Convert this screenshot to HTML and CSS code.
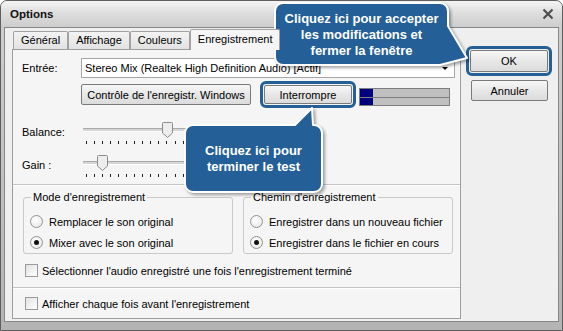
FILE: index.html
```html
<!DOCTYPE html>
<html lang="fr">

<head>
    <meta charset="UTF-8">
    <meta name="viewport" content="width=device-width, initial-scale=1.0">
    <title>Options</title>

    <link rel="stylesheet" href="styles.css">
</head>

<body>

    <div class="screen">

        <!-- fenêtre de dialogue -->
        <div class="window">

            <div class="titlebar">
                <span class="title">Options</span>
                <svg class="close" width="12" height="12" viewBox="0 0 12 12">
                    <path d="M1.5 1.5L10.5 10.5M10.5 1.5L1.5 10.5" stroke="#4f4f4f" stroke-width="2.2" />
                </svg>
            </div>

            <div class="client">

                <div class="main">

                    <!-- onglets -->
                    <div class="tabs">
                        <div class="tab">Général</div>
                        <div class="tab">Affichage</div>
                        <div class="tab">Couleurs</div>
                        <div class="tab active">Enregistrement</div>
                    </div>

                    <div class="panel">

                        <div class="row input-row">
                            <span class="lbl">Entrée:</span>
                            <div class="combo">
                                <span>Stereo Mix (Realtek High Definition Audio) [Actif]</span>
                                <span class="arrow"></span>
                            </div>
                        </div>

                        <div class="row button-row">
                            <button class="btn wide">Contrôle de l'enregistr. Windows</button>
                            <button class="btn stop hl">Interrompre</button>
                            <div class="meter">
                                <div class="bar"><i></i></div>
                                <div class="bar"><i></i></div>
                            </div>
                        </div>

                        <div class="row slider-row balance">
                            <span class="lbl">Balance:</span>
                            <div class="slider">
                                <div class="track"></div>
                                <svg class="thumb" style="left: 79px" width="11" height="16" viewBox="0 0 11 16">
                                    <path d="M0.5 1.5Q0.5 0.5 1.5 0.5H9.5Q10.5 0.5 10.5 1.5V11L5.5 15.5L0.5 11Z" fill="#ededed" stroke="#8a8a8a" />
                                </svg>
                                <div class="ticks"><i></i><i></i><i></i><i></i><i></i><i></i><i></i><i></i><i></i><i></i><i></i><i></i><i></i><i></i><i></i><i></i><i></i><i></i><i></i><i></i><i></i></div>
                            </div>
                        </div>

                        <div class="row slider-row gain">
                            <span class="lbl">Gain :</span>
                            <div class="slider">
                                <div class="track"></div>
                                <svg class="thumb" style="left: 14px" width="11" height="16" viewBox="0 0 11 16">
                                    <path d="M0.5 1.5Q0.5 0.5 1.5 0.5H9.5Q10.5 0.5 10.5 1.5V11L5.5 15.5L0.5 11Z" fill="#ededed" stroke="#8a8a8a" />
                                </svg>
                                <div class="ticks"><i></i><i></i><i></i><i></i><i></i><i></i><i></i><i></i><i></i><i></i><i></i><i></i><i></i><i></i><i></i><i></i><i></i><i></i><i></i><i></i><i></i></div>
                            </div>
                        </div>

                        <div class="sep"></div>

                        <div class="groups">
                            <fieldset class="group">
                                <legend>Mode d'enregistrement</legend>
                                <div class="opt"><span class="radio"></span>Remplacer le son original</div>
                                <div class="opt"><span class="radio checked"></span>Mixer avec le son original</div>
                            </fieldset>
                            <fieldset class="group">
                                <legend>Chemin d'enregistrement</legend>
                                <div class="opt"><span class="radio"></span>Enregistrer dans un nouveau fichier</div>
                                <div class="opt"><span class="radio checked"></span>Enregistrer dans le fichier en cours</div>
                            </fieldset>
                        </div>

                        <div class="check first"><span class="box"></span>Sélectionner l'audio enregistré une fois l'enregistrement terminé</div>

                        <div class="sep"></div>

                        <div class="check"><span class="box"></span>Afficher chaque fois avant l'enregistrement</div>

                    </div>
                </div>

                <!-- boutons à droite -->
                <div class="side">
                    <button class="btn ok hl">OK</button>
                    <button class="btn cancel">Annuler</button>
                </div>

            </div>
        </div>

        <!-- bulles d'aide -->
        <div class="bubble bubble-ok">
            <svg class="shape" width="200" height="72" viewBox="0 0 200 72">
                <path d="M11 3H168A8 8 0 0 1 176 11V26L195 58L168 65H11A8 8 0 0 1 3 57V11A8 8 0 0 1 11 3Z" />
            </svg>
            <div class="text">Cliquez ici pour accepter<br>les modifications et<br>fermer la fenêtre</div>
        </div>

        <div class="bubble bubble-stop">
            <svg class="shape" width="146" height="94" viewBox="0 0 146 94">
                <path d="M11 21H113L130 4L131 21H132A8 8 0 0 1 140 29V80A8 8 0 0 1 132 88H11A8 8 0 0 1 3 80V29A8 8 0 0 1 11 21Z" />
            </svg>
            <div class="text">Cliquez ici pour<br>terminer le test</div>
        </div>

    </div>

</body>

</html>
```

FILE: styles.css
```css
* {
    margin: 0;
    padding: 0;
    box-sizing: border-box;
}

body {
    font-family: "Liberation Sans", Arial, sans-serif;
    font-size: 11px;
    color: #000;
    background: #fff;
}

.screen {
    position: relative;
    width: 563px;
    height: 331px;
    overflow: hidden;
}

/* cadre de la fenêtre */
.window {
    width: 563px;
    height: 331px;
    display: flex;
    flex-direction: column;
    border: 1px solid #5e5e5e;
    border-radius: 7px 7px 0 0;
    background: linear-gradient(#d0d0d0, #b4b4b4);
    padding: 0 3px 8px;
}

.titlebar {
    height: 26px;
    flex: none;
    margin: 0 -3px;
    padding: 0 8px 0 9px;
    display: flex;
    align-items: center;
    justify-content: space-between;
    border-radius: 6px 6px 0 0;
    background: linear-gradient(#f4f4f4, #dedede 45%, #cdcdcd);
}

.title {
    font-weight: bold;
    font-size: 11.5px;
    color: #111;
}

.client {
    flex: 1;
    display: flex;
    border: 1px solid #878787;
    background: #efefef;
    padding: 1px 0 0 7px;
}

.main {
    width: 449px;
    display: flex;
    flex-direction: column;
}

/* onglets */
.tabs {
    height: 20px;
    display: flex;
    align-items: flex-end;
    padding-left: 1px;
    position: relative;
    z-index: 1;
}

.tab {
    height: 18px;
    line-height: 17px;
    padding: 0 7px;
    border: 1px solid #a2a2a2;
    border-bottom: none;
    border-radius: 2px 2px 0 0;
    background: linear-gradient(#f3f3f3, #e2e2e2);
}

.tab.active {
    height: 21px;
    margin-bottom: -1px;
    line-height: 19px;
    padding: 0 7px;
    background: #f5f5f5;
}

.panel {
    height: 270px;
    border: 1px solid #9e9e9e;
    background: #f5f5f5;
    padding: 0 4px 0 9px;
}

.row {
    display: flex;
    align-items: center;
}

.lbl {
    width: 59px;
    flex: none;
}

.input-row {
    margin-top: 8px;
}

.combo {
    flex: 1;
    height: 20px;
    margin-right: 1px;
    border: 1px solid #a7a7a7;
    background: #fff;
    padding-left: 3px;
    display: flex;
    align-items: center;
    justify-content: space-between;
}

.arrow {
    width: 0;
    height: 0;
    margin-right: 6px;
    border-left: 3px solid transparent;
    border-right: 3px solid transparent;
    border-top: 3px solid #000;
}

.button-row {
    margin-top: 6px;
    margin-left: 59px;
    align-items: flex-start;
}

.btn {
    font: inherit;
    color: #000;
    height: 21px;
    border: 1px solid #7a7a7a;
    border-radius: 2px;
    background: linear-gradient(#f7f7f7, #e6e6e6 55%, #dcdcdc);
}

.btn.wide {
    width: 170px;
}

.btn.stop {
    width: 88px;
    height: 19px;
    margin-left: 13px;
    margin-top: 1px;
}

/* bordure bleue de mise en évidence */
.hl {
    outline: 3px solid #245f98;
    outline-offset: 1px;
}

.meter {
    width: 91px;
    height: 18px;
    margin-left: 7px;
    margin-top: 4px;
    border: 1px solid #7d7d7d;
    display: flex;
    flex-direction: column;
}

.meter .bar {
    flex: 1;
    background: #c0c0c0;
}

.meter .bar + .bar {
    border-top: 1px solid #7d7d7d;
}

.meter .bar i {
    display: block;
    width: 13px;
    height: 100%;
    background: #00007f;
}

/* curseurs */
.slider-row {
    align-items: flex-start;
}

.slider-row .lbl {
    margin-top: 4px;
}

.balance {
    margin-top: 16px;
}

.gain {
    margin-top: 10px;
}

.slider {
    position: relative;
    width: 168px;
    height: 23px;
    margin-left: 2px;
}

.track {
    position: absolute;
    left: 0;
    right: 0;
    top: 6px;
    height: 4px;
    border-top: 1px solid #a9a9a9;
    border-bottom: 1px solid #fdfdfd;
    background: #d6d6d6;
}

.thumb {
    position: absolute;
    top: 0;
}

.ticks {
    position: absolute;
    left: 3px;
    right: 3px;
    top: 19px;
    height: 3px;
    display: flex;
    justify-content: space-between;
}

.ticks i {
    width: 1px;
    background: #222;
}

.sep {
    height: 2px;
    margin: 6px -4px 0 -9px;
    border-top: 1px solid #c4c4c4;
    border-bottom: 1px solid #fff;
}

/* groupes */
.groups {
    display: flex;
    gap: 10px;
    margin: 5px 0 0 1px;
}

.group {
    width: 210px;
    height: 63px;
    border: 1px solid #c9c9c9;
    border-radius: 3px;
    padding: 0 0 0 6px;
}

.group legend {
    margin-left: 1px;
    padding: 0 2px;
    line-height: 13px;
}

.opt {
    height: 21px;
    display: flex;
    align-items: center;
}

.opt:first-of-type {
    margin-top: 7px;
}

.radio {
    width: 13px;
    height: 13px;
    margin-right: 6px;
    border: 1px solid #939393;
    border-radius: 50%;
    background: radial-gradient(circle at 40% 35%, #fff, #e4e4e4);
    display: flex;
    align-items: center;
    justify-content: center;
}

.radio.checked::after {
    content: "";
    width: 5px;
    height: 5px;
    border-radius: 50%;
    background: #111;
}

.check {
    height: 15px;
    display: flex;
    align-items: center;
    margin-left: 3px;
}

.check.first {
    margin-top: 9px;
}

.check + .sep {
    margin-top: 9px;
}

.sep + .check {
    margin-top: 7px;
}

.box {
    width: 13px;
    height: 13px;
    margin-right: 4px;
    border: 1px solid #9a9a9a;
    background: linear-gradient(135deg, #e2e2e2, #fff);
}

/* colonne de droite */
.side {
    width: 78px;
    margin-left: 9px;
    display: flex;
    flex-direction: column;
}

.btn.ok {
    height: 22px;
    margin-top: 21px;
}

.btn.cancel {
    margin-top: 8px;
    margin-left: 1px;
    width: 77px;
}

/* bulles d'aide */
.bubble {
    position: absolute;
}

.bubble .shape {
    position: absolute;
    left: 0;
    top: 0;
    overflow: visible;
    filter: drop-shadow(2px 2px 1.5px rgba(0, 0, 0, 0.35));
}

.bubble .shape path {
    fill: #245f98;
    stroke: #fff;
    stroke-width: 2;
    stroke-linejoin: round;
}

.bubble .text {
    position: absolute;
    color: #fff;
    font-weight: bold;
    font-size: 13px;
    line-height: 16px;
    text-align: center;
    display: flex;
    align-items: center;
    justify-content: center;
}

.bubble-ok {
    left: 272px;
    top: 0;
    width: 200px;
    height: 72px;
}

.bubble-ok .text {
    left: 3px;
    top: 5px;
    width: 173px;
    height: 60px;
}

.bubble-stop {
    left: 182px;
    top: 104px;
    width: 146px;
    height: 94px;
}

.bubble-stop .text {
    left: 3px;
    top: 22px;
    width: 137px;
    height: 66px;
}
```
